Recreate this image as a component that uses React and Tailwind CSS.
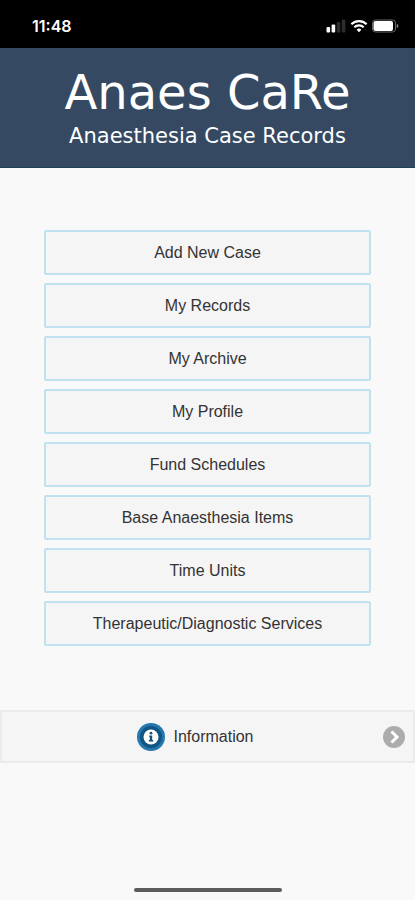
const menuItems = [
  "Add New Case",
  "My Records",
  "My Archive",
  "My Profile",
  "Fund Schedules",
  "Base Anaesthesia Items",
  "Time Units",
  "Therapeutic/Diagnostic Services",
]

function SignalIcon() {
  return (
    <svg viewBox="0 0 20 14" className="h-3.5 w-5" aria-hidden="true">
      <rect x="0.5" y="8" width="3.6" height="5.5" rx="1" fill="#fff" />
      <rect x="5.6" y="5.5" width="3.6" height="8" rx="1" fill="#fff" />
      <rect x="10.7" y="3" width="3.6" height="10.5" rx="1" fill="#2c2c2c" />
      <rect x="15.8" y="0.5" width="3.6" height="13" rx="1" fill="#2c2c2c" />
    </svg>
  )
}

function WifiIcon() {
  return (
    <svg viewBox="0 0 18 14" className="h-3.5 w-[18px]" fill="none" stroke="#fff" strokeWidth="2.2" aria-hidden="true">
      <path d="M1.4 5.2a10.8 10.8 0 0 1 15.2 0" />
      <path d="M4.3 8.3a6.7 6.7 0 0 1 9.4 0" />
      <path d="M9 13.2 6.6 10.8a3.4 3.4 0 0 1 4.8 0z" fill="#fff" stroke="none" />
    </svg>
  )
}

function BatteryIcon() {
  return (
    <svg viewBox="0 0 27 14" className="h-3.5 w-[27px]" aria-hidden="true">
      <rect x="0.5" y="1" width="23" height="12" rx="3" fill="none" stroke="#666" />
      <rect x="1.5" y="2" width="19.5" height="10" rx="2" fill="#fff" />
      <path d="M24.8 5v4c1-.3 1.6-1.1 1.6-2s-.6-1.7-1.6-2z" fill="#888" />
    </svg>
  )
}

function InfoIcon() {
  return (
    <svg viewBox="0 0 28 28" className="size-7" aria-hidden="true">
      <circle cx="14" cy="14" r="14" fill="#2577ad" />
      <circle cx="14" cy="14" r="11" fill="#125584" />
      <circle cx="14" cy="14" r="7.5" fill="#fff" />
      <path d="M12.2 12.5h3v4.5h1v1.5h-4.400v-1.500h1v-3h-.6z" fill="#174f78" />
      <circle cx="14" cy="10.2" r="1.4" fill="#174f78" />
    </svg>
  )
}

function ChevronIcon() {
  return (
    <svg viewBox="0 0 22 22" className="size-[22px]" aria-hidden="true">
      <circle cx="11" cy="11" r="11" fill="#acacac" />
      <path d="M8.5 5.500 14 11l-5.500 5.500" fill="none" stroke="#fff" strokeWidth="3" />
    </svg>
  )
}

export default function App() {
  return (
    <div className="flex min-h-screen flex-col bg-[#f9f9f9] font-['Liberation_Sans',Arial,sans-serif] text-[#333]">
      <div className="flex h-12 items-center justify-between bg-black pt-1 pr-4 pl-8 text-white">
        <span className="font-['Inter',sans-serif] text-base font-semibold">11:48</span>
        <div className="flex items-center gap-1">
          <SignalIcon />
          <WifiIcon />
          <BatteryIcon />
        </div>
      </div>

      <header className="flex h-30 flex-col items-center border-b border-[#1d4058] bg-[#354a62] pt-4 font-['DejaVu_Sans',Verdana,sans-serif] text-white">
        <h1 className="text-5xl leading-14">Anaes CaRe</h1>
        <p className="text-[21px] leading-8">Anaesthesia Case Records</p>
      </header>

      <nav className="mx-11 mt-[62px] flex flex-col gap-2">
        {menuItems.map((item) => (
          <button
            key={item}
            type="button"
            className="h-[45px] rounded-xs border-2 border-[#c0e1f0] bg-[#f5f5f5] text-base"
          >
            {item}
          </button>
        ))}
      </nav>

      <button
        type="button"
        className="mt-16 grid h-[53px] w-full grid-cols-[1fr_auto_1fr] items-center border-2 border-[#ebebeb] bg-[#f5f5f5] pr-2 text-base"
      >
        <span className="col-start-2 flex items-center gap-2 pr-4">
          <InfoIcon />
          Information
        </span>
        <span className="justify-self-end">
          <ChevronIcon />
        </span>
      </button>

      <div className="mx-auto mt-auto mb-2 h-1 w-37 rounded-full bg-[#5c5c5c]" />
    </div>
  )
}
